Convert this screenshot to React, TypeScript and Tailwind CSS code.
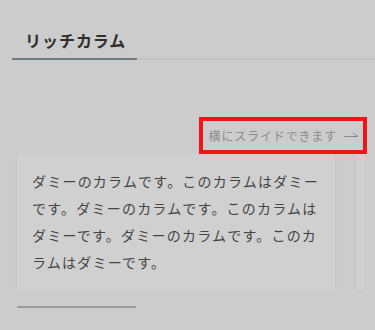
const font = "font-['Noto_Sans_CJK_JP','Noto_Sans',sans-serif]";

const cards = [
  "ダミーのカラムです。このカラムはダミーです。ダミーのカラムです。このカラムはダミーです。ダミーのカラムです。このカラムはダミーです。",
  "ダミーのカラムです。このカラムはダミーです。ダミーのカラムです。このカラムはダミーです。ダミーのカラムです。このカラムはダミーです。",
];

function SlideArrow() {
  return (
    <svg width="15" height="8" viewBox="0 0 15 8" className="ml-[7px] mb-[3px]">
      <path d="M0 6.5H14M14 6.5L9 3" stroke="#8a8a8a" strokeWidth="1" fill="none" />
    </svg>
  );
}

export default function App() {
  return (
    <div className={`${font} h-[330px] w-[375px] overflow-hidden bg-[#cccccc]`}>
      <div className="flex items-end pl-[12px] pt-[28px]">
        <h2 className="border-b-2 border-[#6a7b84] pb-[6px] pl-[13px] pr-[11px] text-[16px] font-bold leading-[24px] tracking-[0.06em] text-[#2f2f2f]">
          リッチカラム
        </h2>
        <div className="flex-1 border-b-2 border-[#c4c4c4]" />
      </div>

      <div className="mt-[57px] flex justify-end pr-[8px]">
        <div className="flex h-[37px] items-center border-4 border-[#f01414] pl-[6px] pr-[4px] text-[12px] tracking-[0.07em] text-[#8c8c8c]">
          横にスライドできます
          <SlideArrow />
        </div>
      </div>

      <div className="mr-[10px] flex gap-[21px] overflow-hidden pl-[17px]">
        {cards.map((text, i) => (
          <div
            key={i}
            className="w-[318px] shrink-0 bg-[#d0d0d0] py-[14px] pl-[15px] pr-[13px] text-[14px] leading-[27px] tracking-[0.087em] text-[#444444] shadow-[0_2px_3px_rgba(0,0,0,0.07)]"
          >
            {text}
          </div>
        ))}
      </div>

      <div className="ml-[17px] mt-[16px] h-[2px] w-[119px] bg-[#9b9b9b]" />
    </div>
  );
}
